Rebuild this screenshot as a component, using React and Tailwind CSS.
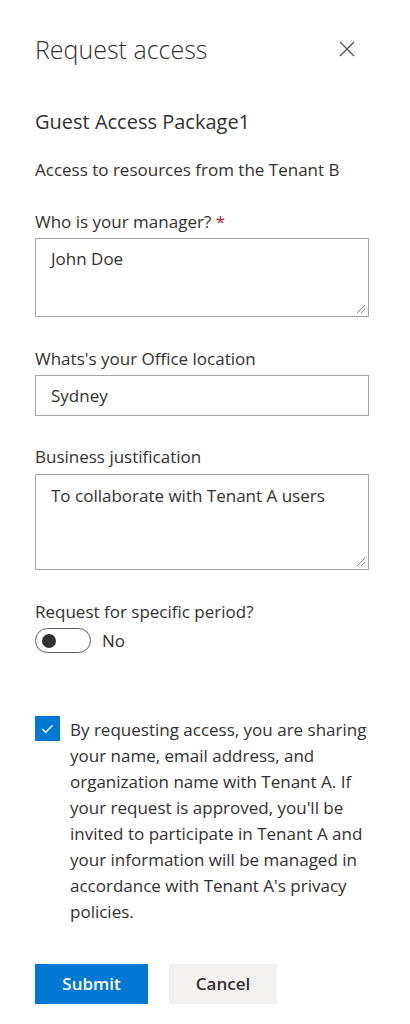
import React from "react";

const font = { fontFamily: '"Open Sans", "Noto Sans", sans-serif' };

function Grip() {
  return (
    <svg className="absolute right-[2px] bottom-[2px]" width="10" height="10" viewBox="0 0 10 10">
      <line x1="9" y1="1" x2="1" y2="9" stroke="#8a8886" strokeWidth="1" />
      <line x1="9" y1="5" x2="5" y2="9" stroke="#8a8886" strokeWidth="1" />
    </svg>
  );
}

export default function App() {
  return (
    <div className="w-[410px] min-h-[1024px] bg-white text-[#323130]" style={font}>
      <div className="pl-[35px] pr-[41px] pt-[33px]">
        <div className="flex items-center justify-between h-[32px]">
          <h1 className="text-[25px] leading-[32px] font-light text-[#323130]">Request access</h1>
          <svg width="16" height="16" viewBox="0 0 16 16" className="mr-[14px]">
            <path d="M1 1 L15 15 M15 1 L1 15" stroke="#505050" strokeWidth="1.3" fill="none" />
          </svg>
        </div>

        <div className="mt-[43px] text-[20px] leading-[28px] font-normal">Guest Access Package1</div>
        <div className="mt-[22px] text-[17px] leading-[24px]">Access to resources from the Tenant B</div>

        <div className="mt-[28px] text-[17px] leading-[24px]">
          Who is your manager? <span className="text-[#a4262c]">*</span>
        </div>
        <div className="relative mt-[4px] h-[79px] border border-[#a6a6a6] pl-[15px] pt-[8px] text-[17px] leading-[24px]">
          John Doe
          <Grip />
        </div>

        <div className="mt-[30px] text-[17px] leading-[24px]">Whats's your Office location</div>
        <div className="mt-[4px] h-[41px] border border-[#a6a6a6] pl-[15px] pt-[8px] text-[17px] leading-[24px]">
          Sydney
        </div>

        <div className="mt-[29px] text-[17px] leading-[24px]">Business justification</div>
        <div className="relative mt-[5px] h-[96px] border border-[#a6a6a6] pl-[15px] pt-[9px] text-[17px] leading-[24px]">
          To collaborate with Tenant A users
          <Grip />
        </div>

        <div className="mt-[30px] text-[17px] leading-[24px]">Request for specific period?</div>
        <div className="mt-[4px] flex items-center h-[25px]">
          <div className="w-[56px] h-[25px] rounded-full border border-[#605e5c] flex items-center pl-[6px]">
            <div className="w-[14px] h-[14px] rounded-full bg-[#323130]" />
          </div>
          <span className="ml-[11px] text-[17px] leading-[24px]">No</span>
        </div>

        <div className="mt-[64px] flex items-start">
          <div className="mt-[-1px] w-[25px] h-[25px] shrink-0 bg-[#0078d4] flex items-center justify-center">
            <svg width="15" height="15" viewBox="0 0 16 16">
              <path d="M2.5 8.5 L6 12 L13.5 4.5" stroke="white" strokeWidth="1.4" fill="none" />
            </svg>
          </div>
          <p className="ml-[10px] text-[17px] leading-[26px] whitespace-nowrap">
            By requesting access, you are sharing<br />
            your name, email address, and<br />
            organization name with Tenant A. If<br />
            your request is approved, you'll be<br />
            invited to participate in Tenant A and<br />
            your information will be managed in<br />
            accordance with Tenant A's privacy<br />
            policies.
          </p>
        </div>

        <div className="mt-[39px] flex gap-[21px]">
          <button className="w-[113px] h-[40px] bg-[#0078d4] text-white text-[17px] font-semibold" style={font}>
            Submit
          </button>
          <button className="w-[108px] h-[40px] bg-[#f3f2f1] text-[#323130] text-[17px] font-semibold" style={font}>
            Cancel
          </button>
        </div>
      </div>
    </div>
  );
}
